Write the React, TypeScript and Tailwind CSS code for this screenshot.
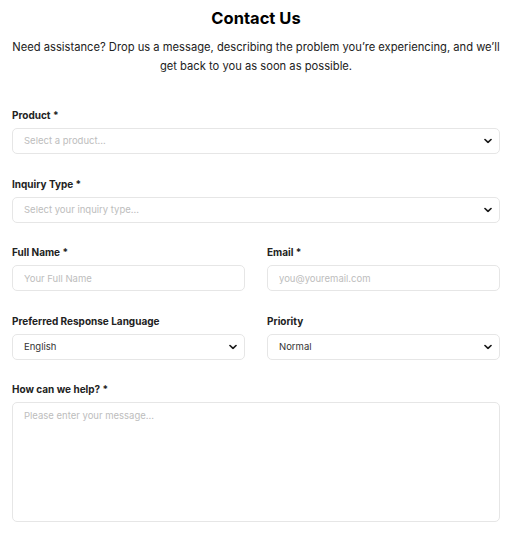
import { useState } from 'react'

function Chevron() {
  return (
    <svg
      className="pointer-events-none absolute right-[8px] top-1/2 -translate-y-1/2"
      width="8"
      height="5"
      viewBox="0 0 8 5"
      fill="none"
    >
      <path d="M1 1 4 3.8 7 1" stroke="#1a1a1a" strokeWidth="1.7" strokeLinecap="round" strokeLinejoin="round" />
    </svg>
  )
}

function Label({ children }: { children: React.ReactNode }) {
  return <label className="block text-[10px] font-bold leading-[14px] text-[#222] mb-[6px]">{children}</label>
}

const box =
  'block w-full h-[26px] rounded-[5px] border border-[#e6e6e6] bg-white px-[11px] text-[9.5px] outline-none'

function Select({ value, onChange, options, placeholder }: {
  value: string
  onChange: (v: string) => void
  options: string[]
  placeholder?: string
}) {
  return (
    <div className="relative">
      <select
        value={value}
        onChange={(e) => onChange(e.target.value)}
        className={`${box} appearance-none ${value ? 'text-[#333]' : 'text-[#bdbdbd]'}`}
      >
        {placeholder && <option value="">{placeholder}</option>}
        {options.map((o) => (
          <option key={o} value={o}>{o}</option>
        ))}
      </select>
      <Chevron />
    </div>
  )
}

export default function App() {
  const [product, setProduct] = useState('')
  const [inquiry, setInquiry] = useState('')
  const [language, setLanguage] = useState('English')
  const [priority, setPriority] = useState('Normal')

  return (
    <div className="min-h-screen bg-white font-['Inter',sans-serif] text-[#111]">
      <div className="pl-[12px] pr-[21px] pt-[7px] pb-[14px]">
        <h1 className="text-center text-[16.5px] font-bold leading-[22px] text-black">Contact Us</h1>
        <p className="mt-[9px] text-center text-[11.2px] leading-[19px] text-[#222]">
          Need assistance? Drop us a message, describing the problem you’re experiencing, and we’ll
          <br />
          get back to you as soon as possible.
        </p>

        <form className="mt-[32px]">
          <div>
            <Label>Product *</Label>
            <Select value={product} onChange={setProduct} placeholder="Select a product..." options={['Product A', 'Product B']} />
          </div>

          <div className="mt-[23px]">
            <Label>Inquiry Type *</Label>
            <Select value={inquiry} onChange={setInquiry} placeholder="Select your inquiry type..." options={['General', 'Billing', 'Technical']} />
          </div>

          <div className="mt-[22px] grid grid-cols-2 gap-x-[22px]">
            <div>
              <Label>Full Name *</Label>
              <input className={`${box} text-[#333] placeholder:text-[#bdbdbd]`} placeholder="Your Full Name" />
            </div>
            <div>
              <Label>Email *</Label>
              <input className={`${box} text-[#333] placeholder:text-[#bdbdbd]`} placeholder="you@youremail.com" />
            </div>
          </div>

          <div className="mt-[23px] grid grid-cols-2 gap-x-[22px]">
            <div>
              <Label>Preferred Response Language</Label>
              <Select value={language} onChange={setLanguage} options={['English', 'Español', 'Français']} />
            </div>
            <div>
              <Label>Priority</Label>
              <Select value={priority} onChange={setPriority} options={['Low', 'Normal', 'High']} />
            </div>
          </div>

          <div className="mt-[22px]">
            <Label>How can we help? *</Label>
            <textarea
              className="block w-full h-[120px] resize-none rounded-[5px] border border-[#e6e6e6] bg-white px-[11px] py-[6px] text-[9.5px] text-[#333] outline-none placeholder:text-[#bdbdbd]"
              placeholder="Please enter your message..."
            />
          </div>
        </form>
      </div>
    </div>
  )
}
